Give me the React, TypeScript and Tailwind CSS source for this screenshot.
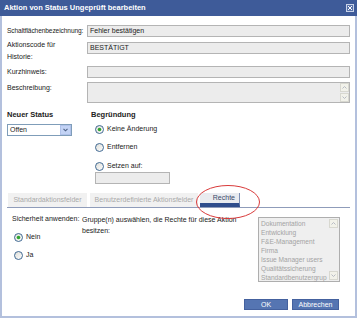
import { ReactNode } from "react";

const Radio = ({ checked }: { checked?: boolean }) => (
  <svg width="9" height="9" viewBox="0 0 9 9" className="shrink-0">
    <defs>
      <linearGradient id="rg" x1="0" y1="0" x2="1" y2="1">
        <stop offset="0" stopColor="#dcdcd6" />
        <stop offset="1" stopColor="#ffffff" />
      </linearGradient>
    </defs>
    <circle cx="4.5" cy="4.5" r="4" fill="url(#rg)" stroke="#2f5c8a" strokeWidth="0.9" />
    {checked && <circle cx="4.5" cy="4.5" r="1.8" fill="#2fa52f" />}
  </svg>
);

const Field = ({ className = "", children }: { className?: string; children?: ReactNode }) => (
  <div className={`h-[12px] border border-[#b4b4b4] bg-[#ececec] flex items-center pl-[2px] text-[#222] ${className}`}>
    {children}
  </div>
);

const ScrollArrow = ({ up }: { up?: boolean }) => (
  <div className="w-[9px] h-[9px] bg-[#f2f2ea] border border-[#d8d8d0] flex items-center justify-center">
    <svg width="5" height="3" viewBox="0 0 5 3">
      <path d={up ? "M0.5 2.5 L2.5 0.5 L4.5 2.5" : "M0.5 0.5 L2.5 2.5 L4.5 0.5"} fill="none" stroke="#b0b4c0" strokeWidth="0.9" />
    </svg>
  </div>
);

export default function App() {
  const groups = [
    "Dokumentation",
    "Entwicklung",
    "F&E-Management",
    "Firma",
    "Issue Manager users",
    "Qualitätssicherung",
    "Standardbenutzergrup",
  ];

  return (
    <div
      className="relative w-[357px] h-[318px] flex flex-col bg-white text-[7px] text-[#222]"
      style={{ fontFamily: '"Liberation Sans", Arial, sans-serif' }}
    >
      {/* Titelleiste */}
      <div className="h-[16px] bg-[#3e5b99] flex items-center justify-between pl-[4px] pr-[3px]">
        <span className="text-white font-bold text-[7.5px]">Aktion von Status Ungeprüft bearbeiten</span>
        <div className="w-[8px] h-[8px] border border-[#c8d2e8] bg-[#5872aa] flex items-center justify-center">
          <svg width="6" height="6" viewBox="0 0 6 6">
            <path d="M1 1 L5 5 M5 1 L1 5" stroke="#ffffff" strokeWidth="1" />
          </svg>
        </div>
      </div>

      <div className="flex-1 flex flex-col border-x-2 border-b-2 border-[#b3c0dd] pl-[5px] pt-[9px]">
        <div className="w-[343px] flex flex-col">
          {/* Felder */}
          <div className="flex items-center h-[12px]">
            <div className="w-[80px] whitespace-nowrap text-[6.6px] tracking-[-0.1px]">Schaltflächenbezeichnung:</div>
            <Field className="w-[263px]">Fehler bestätigen</Field>
          </div>
          <div className="flex items-start mt-[2px]">
            <div className="w-[80px] leading-[12px]">
              Aktionscode für
              <br />
              Historie:
            </div>
            <Field className="w-[263px] mt-[3px]">BESTÄTIGT</Field>
          </div>
          <div className="flex items-center h-[12px] mt-[3px]">
            <div className="w-[80px]">Kurzhinweis:</div>
            <Field className="w-[263px]" />
          </div>
          <div className="flex items-start mt-[4px]">
            <div className="w-[80px] leading-[12px]">Beschreibung:</div>
            <div className="w-[263px] h-[21px] border border-[#b4b4b4] bg-[#ececec] flex justify-end items-stretch">
              <div className="flex flex-col justify-between">
                <ScrollArrow up />
                <ScrollArrow />
              </div>
            </div>
          </div>

          {/* Status / Begründung */}
          <div className="flex mt-[6px]">
            <div className="w-[84px] flex flex-col">
              <div className="font-bold text-[7.5px] leading-[12px]">Neuer Status</div>
              <div className="mt-[3px] w-[65px] h-[12px] border border-[#7f9db9] bg-white flex items-center justify-between">
                <span className="pl-[2px]">Offen</span>
                <div className="w-[11px] h-[10px] bg-[#c3d3f5] border border-[#b0c2ea] flex items-center justify-center">
                  <svg width="5" height="4" viewBox="0 0 5 4">
                    <path d="M0.5 0.8 L2.5 2.8 L4.5 0.8" fill="none" stroke="#4d6185" strokeWidth="1.1" />
                  </svg>
                </div>
              </div>
            </div>
            <div className="flex flex-col">
              <div className="font-bold text-[7.5px] leading-[12px]">Begründung</div>
              <div className="flex items-center gap-[3px] h-[12px] mt-[2px] pl-[4px]">
                <Radio checked />
                <span>Keine Änderung</span>
              </div>
              <div className="flex items-center gap-[3px] h-[12px] mt-[6px] pl-[4px]">
                <Radio />
                <span>Entfernen</span>
              </div>
              <div className="flex items-center gap-[3px] h-[12px] mt-[7px] pl-[4px]">
                <Radio />
                <span>Setzen auf:</span>
              </div>
              <Field className="w-[75px] ml-[4px]" />
            </div>
          </div>

          {/* Tabs */}
          <div className="mt-[9px] flex items-end border-b border-[#8f9cba] h-[15px]">
            <div className="ml-[1px] w-[79px] h-[14px] bg-[#f1f1f1] text-[#a9a9a9] flex items-center justify-center">
              Standardaktionsfelder
            </div>
            <div className="ml-[3px] w-[108px] h-[14px] bg-[#f1f1f1] text-[#a9a9a9] flex items-center justify-center">
              Benutzerdefinierte Aktionsfelder
            </div>
            <div className="ml-[2px] w-[40px] h-[14px] bg-[#e9ebef] border-r border-[#7d8fb5] border-b-4 border-b-[#2f4d8c] text-[#3a4a6a] flex items-center justify-end pr-[4px]">
              Rechte
            </div>
          </div>

          {/* Rechte */}
          <div className="flex mt-[5px]">
            <div className="w-[75px] pl-[5px] flex flex-col">
              <div className="leading-[12px] whitespace-nowrap">Sicherheit anwenden:</div>
              <div className="flex items-center gap-[3px] h-[12px] mt-[6px] pl-[2px]">
                <Radio checked />
                <span>Nein</span>
              </div>
              <div className="flex items-center gap-[3px] h-[12px] mt-[6px] pl-[2px]">
                <Radio />
                <span>Ja</span>
              </div>
            </div>
            <div className="w-[176px] leading-[11px] pt-[0.5px]">
              Gruppe(n) auswählen, die Rechte für diese Aktion
              <br />
              besitzen:
            </div>
            <div className="mt-[4px] w-[82px] h-[65px] border border-[#aeaeae] bg-[#efefef] flex">
              <div className="flex-1 pl-[2px] pt-[0.5px] text-[#a3a3a3] text-[6.6px] leading-[9px] whitespace-nowrap">
                {groups.map((g) => (
                  <div key={g}>{g}</div>
                ))}
              </div>
              <div className="w-[10px] flex flex-col justify-between py-[1px] pr-[1px]">
                <ScrollArrow up />
                <ScrollArrow />
              </div>
            </div>
          </div>

          {/* Buttons */}
          <div className="flex justify-end gap-[4px] mt-[17px] mr-[11px]">
            <button className="w-[44px] h-[11px] bg-[#5575b2] border border-[#44619e] text-white text-[7px] leading-none">
              OK
            </button>
            <button className="w-[47px] h-[11px] bg-[#5575b2] border border-[#44619e] text-white text-[7px] leading-none">
              Abbrechen
            </button>
          </div>
        </div>
      </div>

      {/* Markierung um den Tab "Rechte" */}
      <svg className="absolute left-[195px] top-[184px] pointer-events-none" width="66" height="36" viewBox="0 0 66 36">
        <ellipse cx="33" cy="18" rx="31.5" ry="16.5" fill="none" stroke="#d93a3a" strokeWidth="1" />
      </svg>
    </div>
  );
}
